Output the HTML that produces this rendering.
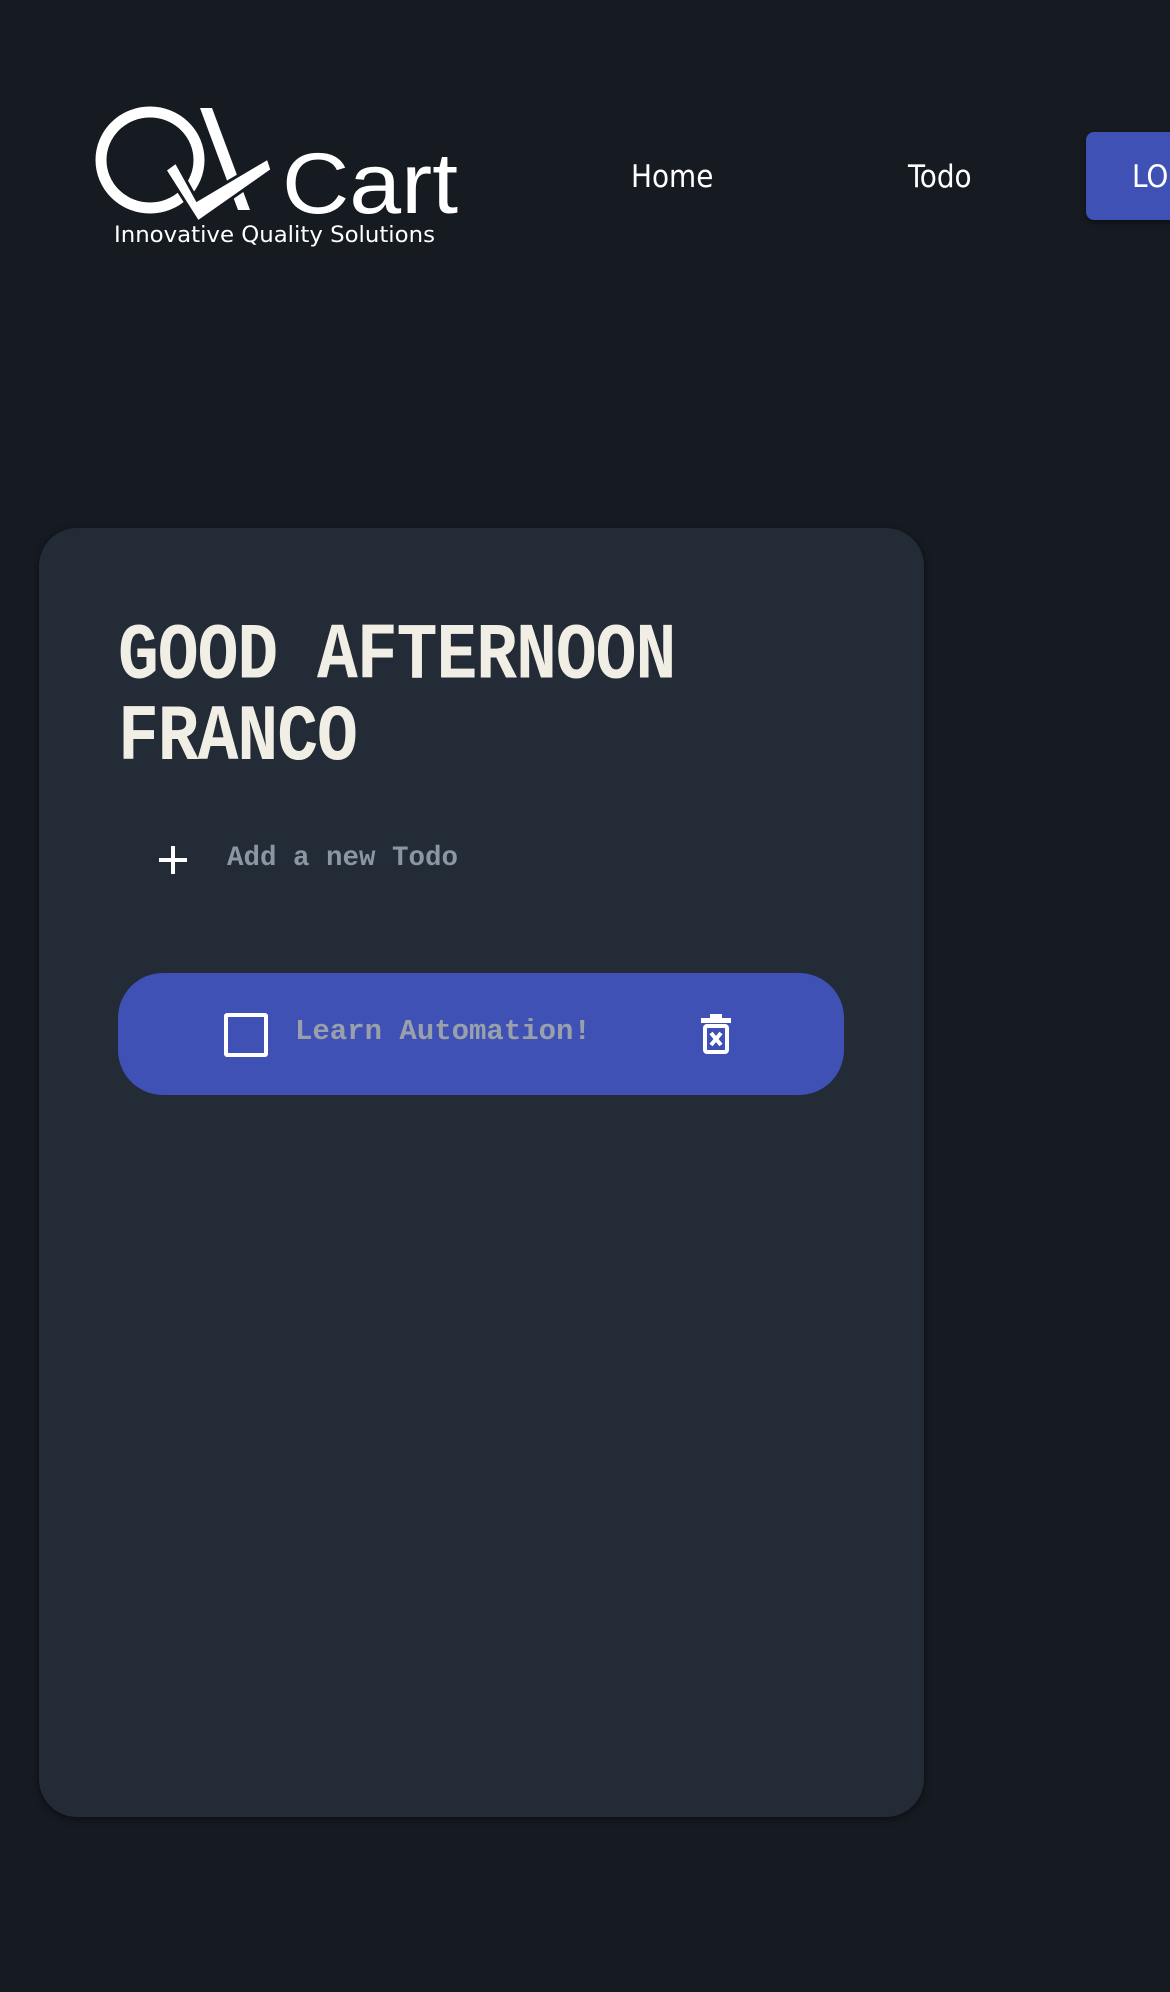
<!DOCTYPE html>
<html><head><meta charset="utf-8"><style>
body{margin:0;width:1170px;height:1992px;background:#161b22;position:relative;overflow:hidden;font-family:"Liberation Mono",monospace}
.abs{position:absolute}
.nav{font-family:"DejaVu Sans Condensed","Liberation Sans",sans-serif;color:#fff;font-size:31px;top:159px}
.btn{left:1086px;top:132px;width:120px;height:88px;background:#3f51b5;border-radius:8px;box-shadow:0 3px 6px rgba(0,0,0,.4)}
.card{left:39px;top:528px;width:885px;height:1289px;background:#222b36;border-radius:38px;box-shadow:0 2px 8px rgba(0,0,0,.5)}
h1{margin:0;position:absolute;left:118px;top:616px;font-size:68px;line-height:69px;color:#f1eee6;font-weight:bold;transform:scaleY(1.18);transform-origin:0 0;letter-spacing:-1px}
.add{left:227px;top:843px;font-size:27.5px;color:#8a96a3;font-weight:bold}
.item{left:118px;top:973px;width:726px;height:122px;background:#3f51b5;border-radius:45px}
.txt{left:295px;top:1015px;font-size:29px;color:#9aa0aa;font-weight:bold}
</style></head><body>
<svg class="abs" style="left:0;top:0" width="480" height="260">
<ellipse cx="150" cy="160" rx="49" ry="48" fill="none" stroke="#fff" stroke-width="11"/>
<polygon points="200,108 212,108 250,210 238,210" fill="#fff"/>
<polygon points="165,170 176,162 197,200 268,158 272,170 198,222" fill="#fff" stroke="#161b22" stroke-width="3"/>
<text x="282" y="213" font-family="Liberation Sans,sans-serif" font-size="86" fill="#fff" textLength="176" lengthAdjust="spacingAndGlyphs">Cart</text>
<text x="114" y="242" font-family="DejaVu Sans Condensed,Liberation Sans,sans-serif" font-size="22" fill="#fff" textLength="321" lengthAdjust="spacingAndGlyphs">Innovative Quality Solutions</text>
</svg>
<div class="abs nav" style="left:631px">Home</div>
<div class="abs nav" style="left:908px">Todo</div>
<div class="abs btn"><span class="abs nav" style="left:46px;top:27px">LO</span></div>
<div class="abs card"></div>
<h1>GOOD AFTERNOON<br>FRANCO</h1>
<svg class="abs" style="left:156px;top:843px" width="34" height="34"><path d="M17 3V31M3 17H31" stroke="#fff" stroke-width="4"/></svg>
<div class="abs add">Add a new Todo</div>
<div class="abs item"></div>
<div class="abs" style="left:224px;top:1013px;width:36px;height:36px;border:4px solid #fff;border-radius:3px"></div>
<div class="abs txt">Learn Automation!</div>
<svg class="abs" style="left:700px;top:1014px" width="32" height="40" viewBox="0 0 32 40">
<rect x="1" y="4" width="30" height="5" fill="#fff"/><rect x="10" y="0" width="12" height="4" fill="#fff"/>
<rect x="5" y="12" width="22" height="26" rx="2" fill="none" stroke="#fff" stroke-width="4"/>
<path d="M11 19L21 31M21 19L11 31" stroke="#fff" stroke-width="4"/>
</svg>
</body></html>
